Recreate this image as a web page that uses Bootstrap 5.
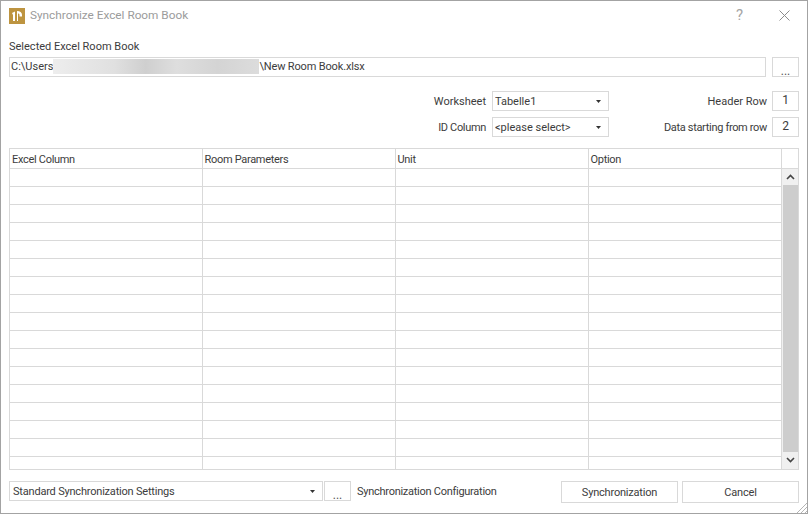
<!DOCTYPE html>
<html lang="en">
<head>
  <meta charset="UTF-8" />
  <title>Synchronize Excel Room Book</title>
  <link href="https://cdn.jsdelivr.net/npm/bootstrap@5.3.0/dist/css/bootstrap.min.css" rel="stylesheet" />
  <style>
    html, body { height: 515px; overflow: hidden; background: #fff; }
    body { font: 11px/15px Roboto, "Liberation Sans", Arial, sans-serif; color: #3c3c3c; }
    .dlg { height: 514px; border: 1px solid #a3a3a3; position: relative; }
    .dlg-title { height: 29px; padding-left: 8px; gap: 5px; color: #9b9b9b; font-size: 11.8px; }
    .dlg-title .help { font-size: 15px; color: #a5a5a5; margin-right: 31px; }
    .dlg-title .closer { margin-right: 17px; }
    .dlg-body { padding: 9px 8px 0 8px; height: 483px; }
    .sel-lbl { margin-bottom: 3px; }
    .fld, .fld:focus { border: 1px solid #d9d9d9; border-radius: 0; box-shadow: none; font-size: 11px; line-height: 15px; color: #3c3c3c; background-color: #fff; }
    .path-box { width: 757px; height: 20px; padding: 1px; }
    .path-end { letter-spacing: -.15px; }
    .blur-bit { width: 206px; height: 15px; background: linear-gradient(90deg, #ededed, #e0e0e0 30%, #cfcfcf 45%, #dedede 60%, #d4d4d4 80%, #dcdcdc); }
    .dots { width: 27px; height: 20px; padding: 3px 0 0; font-size: 12px; line-height: 20px; color: #555; border: 1px solid #d9d9d9; border-radius: 0; background: #fff; }
    .pick.form-select { height: 20px; padding: 0 0 0 2px; background-size: 5px 3px; background-position: right 7px center;
      background-image: url("data:image/svg+xml,%3csvg xmlns='http://www.w3.org/2000/svg' viewBox='0 0 5 3'%3e%3cpath fill='%23333' d='M0 0h5L2.5 3z'/%3e%3c/svg%3e"); }
    .pick-lg { width: 314px; }
    .pick-lg.form-select { padding-left: 3px; letter-spacing: -.2px; }
    .num-box { height: 20px; border: 1px solid #d9d9d9; text-align: center; line-height: 16px; font-size: 12px; }
    .opts { margin-top: 14px; display: grid; grid-template-columns: 1fr 117px 163px 27px; grid-auto-rows: 20px; row-gap: 6px; align-items: center; }
    .opts-lbl { text-align: right; padding-right: 6px; }
    .opts-lbl-r { text-align: right; padding-right: 5px; }
    .tight { letter-spacing: -.33px; }
    .grid-wrap { height: 322px; margin-top: 11px; border: 1px solid #d9d9d9; overflow: hidden; }
    .grid-tbl { table-layout: fixed; width: 788px; margin: 0; border-collapse: collapse; color: #3c3c3c; }
    .grid-tbl th, .grid-tbl td { border: 0; border-right: 1px solid #d9d9d9; border-bottom: 1px solid #d9d9d9; padding: 0 0 0 2px; font-weight: 400; height: 18px; font-size: 11px; box-shadow: none; }
    .grid-tbl th { height: 19px; padding-bottom: 1px; letter-spacing: -.3px; }
    .grid-tbl .col-a { width: 192px; }
    .grid-tbl .col-b { width: 193px; }
    .grid-tbl .col-s { width: 17px; }
    .scroll-cell { padding: 0 !important; border-right: 0 !important; vertical-align: top; }
    .head-end { border-right: 0 !important; }
    .vbar { height: 301px; width: 17px; background: #f0f0f0; }
    .vbar-btn { height: 16px; }
    .vbar-thumb { height: 267px; width: 15px; margin-left: 1px; background: #cdcdcd; }
    .foot { margin-top: 11px; letter-spacing: -.2px; }
    .foot .dots { margin-left: 1px; }
    .cfg-lbl { margin-left: 6px; margin-top: 3px; letter-spacing: -.27px; }
    .act { width: 117px; height: 22px; padding: 3px 0 0; border: 1px solid #d9d9d9; border-radius: 0; background: #fff; font-size: 11px; letter-spacing: -.2px; color: #3c3c3c; }
    .grip { position: absolute; right: 0; bottom: 0; }
  </style>
</head>
<body>
  <div class="dlg">
    <!-- title bar -->
    <div class="dlg-title d-flex align-items-center">
      <svg width="16" height="16" viewBox="0 0 16 16">
        <rect width="16" height="16" fill="#bd9440" />
        <path fill="#fff" d="M3 5l3-1.5V13H4V7zM8 3c3 0 5 1.5 5 4v1.5h-2.5V7c0-1-.7-1.5-1.5-1.5V13H8z" />
      </svg>
      <span>Synchronize Excel Room Book</span>
      <span class="help ms-auto">?</span>
      <svg class="closer" width="11" height="11" viewBox="0 0 11 11"><path stroke="#8c8c8c" fill="none" d="M.5.5l10 10M10.5.5l-10 10" /></svg>
    </div>

    <div class="dlg-body">
      <div class="sel-lbl">Selected Excel Room Book</div>
      <div class="d-flex justify-content-between">
        <div class="fld path-box d-flex"><span>C:\Users</span><span class="blur-bit"></span><span class="path-end">\New Room Book.xlsx</span></div>
        <button class="btn dots">...</button>
      </div>

      <!-- worksheet options -->
      <div class="opts">
        <span class="opts-lbl">Worksheet</span>
        <select class="form-select fld pick"><option>Tabelle1</option></select>
        <span class="opts-lbl-r">Header Row</span>
        <div class="num-box">1</div>
        <span class="opts-lbl tight">ID Column</span>
        <select class="form-select fld pick"><option>&lt;please select&gt;</option></select>
        <span class="opts-lbl-r tight">Data starting from row</span>
        <div class="num-box">2</div>
      </div>

      <!-- mapping grid -->
      <div class="grid-wrap">
        <table class="table grid-tbl">
          <thead>
            <tr><th class="col-a">Excel Column</th><th class="col-b">Room Parameters</th><th class="col-b">Unit</th><th class="col-b">Option</th><th class="head-end col-s"></th></tr>
          </thead>
          <tbody id="gridRows"></tbody>
        </table>
      </div>

      <div class="foot d-flex">
        <select class="form-select fld pick pick-lg"><option>Standard Synchronization Settings</option></select>
        <button class="btn dots">...</button>
        <span class="cfg-lbl">Synchronization Configuration</span>
        <div class="ms-auto d-flex gap-1">
          <button class="btn act">Synchronization</button>
          <button class="btn act">Cancel</button>
        </div>
      </div>
    </div>

    <svg class="grip" width="11" height="11" viewBox="0 0 11 11"><path stroke="#b5b5b5" d="M11 1L1 11M11 5l-6 6M11 9l-2 2" /></svg>
  </div>

  <script src="https://cdn.jsdelivr.net/npm/bootstrap@5.3.0/dist/js/bootstrap.bundle.min.js"></script>
  <script>
    const rows = document.getElementById("gridRows");
    let html = "";
    for (let i = 0; i < 17; i++) {
      html += "<tr><td></td><td></td><td></td><td></td>";
      if (i === 0) {
        html += `<td class="scroll-cell" rowspan="17"><div class="vbar">
          <div class="vbar-btn d-flex align-items-center justify-content-center"><svg width="9" height="6" viewBox="0 0 9 6"><path fill="none" stroke="#444" stroke-width="1.6" d="M1 5l3.5-3.5L8 5"/></svg></div>
          <div class="vbar-thumb"></div>
          <div class="vbar-btn d-flex align-items-center justify-content-center"><svg width="9" height="6" viewBox="0 0 9 6"><path fill="none" stroke="#444" stroke-width="1.6" d="M1 1l3.5 3.5L8 1"/></svg></div>
        </div></td>`;
      }
      html += "</tr>";
    }
    rows.innerHTML = html;
  </script>
</body>
</html>
